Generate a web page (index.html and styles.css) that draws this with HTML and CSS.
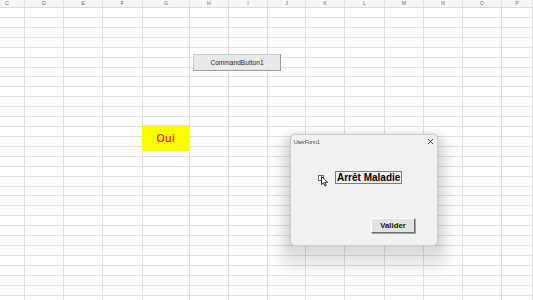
FILE: index.html
```html
<!DOCTYPE html>
<html lang="fr">
<head>
<meta charset="utf-8">
<title>Feuille</title>
<link rel="stylesheet" href="styles.css">
</head>
<body>
<div class="sheet">
  <div class="cols">
    <div class="col c-c"><div class="hd">C</div></div>
    <div class="col c-d"><div class="hd">D</div></div>
    <div class="col c-e"><div class="hd">E</div></div>
    <div class="col c-f"><div class="hd">F</div></div>
    <div class="col c-g"><div class="hd">G</div></div>
    <div class="col c-h"><div class="hd">H</div></div>
    <div class="col c-i"><div class="hd">I</div></div>
    <div class="col c-j"><div class="hd">J</div></div>
    <div class="col c-k"><div class="hd">K</div></div>
    <div class="col c-l"><div class="hd">L</div></div>
    <div class="col c-m"><div class="hd">M</div></div>
    <div class="col c-n"><div class="hd">N</div></div>
    <div class="col c-o"><div class="hd">O</div></div>
    <div class="col c-p"><div class="hd">P</div></div>
  </div>

  <div class="cell-oui">Oui</div>

  <button class="cmd-btn" type="button">CommandButton1</button>

  <div class="userform">
    <div class="uf-title">
      <span class="uf-name">UserForm1</span>
      <svg class="uf-close" width="7" height="7" viewBox="0 0 7 7"><path d="M1 1L6 6M6 1L1 6" stroke="#333" stroke-width="0.9" fill="none"/></svg>
    </div>
    <div class="uf-body">
      <div class="chk-row">
        <span class="chk">
          <svg class="cursor" width="8" height="11" viewBox="0 0 8 11"><path d="M0.5 0.5V8.5L2.5 6.8L4 10L5.3 9.4L3.9 6.3L6.6 6.3Z" fill="#fff" stroke="#000" stroke-width="0.8" stroke-linejoin="round"/></svg>
        </span>
        <span class="chk-label">Arrêt Maladie</span>
      </div>
      <div class="uf-foot">
        <button class="valider" type="button">Valider</button>
      </div>
    </div>
  </div>
</div>
</body>
</html>
```
FILE: styles.css
```css
html, body {
  margin: 0;
  padding: 0;
  background: #ffffff;
}
body {
  width: 533px;
  height: 300px;
  overflow: hidden;
  font-family: "Liberation Sans", Arial, sans-serif;
  -webkit-font-smoothing: antialiased;
}
.sheet {
  position: relative;
  width: 533px;
  height: 300px;
  background-color: #fff;
  background-image: repeating-linear-gradient(to bottom, transparent 0, transparent 8.92px, #e1e1e1 8.92px, #e1e1e1 9.92px);
  background-position: 0 8px;
  background-repeat: repeat-x;
  background-size: 100% 292px;
}
.cols {
  display: flex;
  height: 300px;
}
.col {
  box-sizing: border-box;
  border-right: 1px solid #e0e0e0;
  height: 300px;
  flex: none;
}
.hd {
  height: 8px;
  box-sizing: border-box;
  border-bottom: 1px solid #dcdcdc;
  background: #f7f7f7;
  color: #707070;
  font-family: "Liberation Sans", Arial, sans-serif;
  font-size: 5.4px;
  line-height: 7px;
  text-align: center;
  transform: translateZ(0);
}
.c-c { width: 25px; }
.c-c .hd { text-align: left; padding-left: 5px; }
.c-d { width: 39px; }
.c-e { width: 39px; }
.c-f { width: 40px; }
.c-g { width: 47px; }
.c-h { width: 39px; }
.c-i { width: 39px; }
.c-j { width: 38px; }
.c-k { width: 39px; }
.c-l { width: 40px; }
.c-m { width: 39px; }
.c-n { width: 39px; }
.c-o { width: 39px; }
.c-p { width: 31px; }

.cell-oui {
  position: absolute;
  left: 142px;
  top: 125px;
  width: 47px;
  height: 26px;
  background: #ffff00;
  color: #f01e0a;
  font-family: "Open Sans", "Liberation Sans", sans-serif;
  font-weight: 600;
  font-size: 11px;
  line-height: 26px;
  text-align: center;
}

.cmd-btn {
  position: absolute;
  left: 193px;
  top: 54px;
  width: 88px;
  height: 17px;
  margin: 0;
  padding: 0;
  box-sizing: border-box;
  background: #e9e9e9;
  border: 1px solid #c8c8c8;
  border-right-color: #9a9a9a;
  border-bottom-color: #9a9a9a;
  font-family: "Liberation Sans", Arial, sans-serif;
  font-size: 6.6px;
  color: #2a2a2a;
  text-align: center;
}

.userform {
  position: absolute;
  left: 290px;
  top: 134px;
  width: 148px;
  height: 112px;
  box-sizing: border-box;
  background: #f1f1f1;
  border: 1px solid #cfcfcf;
  border-radius: 5px;
  box-shadow: 0 0 2px rgba(0,0,0,0.14), 0 4px 6px 5px rgba(0,0,0,0.06), 0 12px 12px 11px rgba(0,0,0,0.09);
  display: flex;
  flex-direction: column;
}
.uf-title {
  height: 13px;
  display: flex;
  align-items: center;
  justify-content: space-between;
  padding: 0 3px 0 3px;
}
.uf-name {
  font-family: "Liberation Sans", Arial, sans-serif;
  font-size: 5.2px;
  color: #404040;
  padding-top: 1px;
  transform: translateZ(0);
}
.uf-close {
  display: block;
}
.uf-body {
  flex: 1;
  display: flex;
  flex-direction: column;
}
.chk-row {
  display: flex;
  align-items: center;
  margin-top: 23px;
  padding-left: 27px;
}
.chk {
  position: relative;
  width: 6px;
  height: 6px;
  box-sizing: border-box;
  border: 1px solid #6a6a6a;
  background: #fff;
  margin-top: 1px;
}
.cursor {
  position: absolute;
  left: 2px;
  top: 0;
}
.chk-label {
  margin-left: 11px;
  box-sizing: border-box;
  height: 13px;
  padding: 0 1px;
  border: 1px solid #7a7a7a;
  font-weight: bold;
  font-size: 10px;
  line-height: 11px;
  color: #000;
}
.uf-foot {
  display: flex;
  justify-content: flex-end;
  padding-right: 22px;
  margin-top: 34px;
}
.valider {
  width: 44px;
  height: 15px;
  margin: 0;
  padding: 0;
  box-sizing: border-box;
  background: #e3e3e3;
  border: 1px solid #ffffff;
  border-right-color: #6e6e6e;
  border-bottom-color: #6e6e6e;
  box-shadow: 1px 1px 0 #a0a0a0;
  font-family: "Liberation Sans", Arial, sans-serif;
  font-weight: bold;
  font-size: 7.8px;
  color: #111;
  text-align: center;
}
```
